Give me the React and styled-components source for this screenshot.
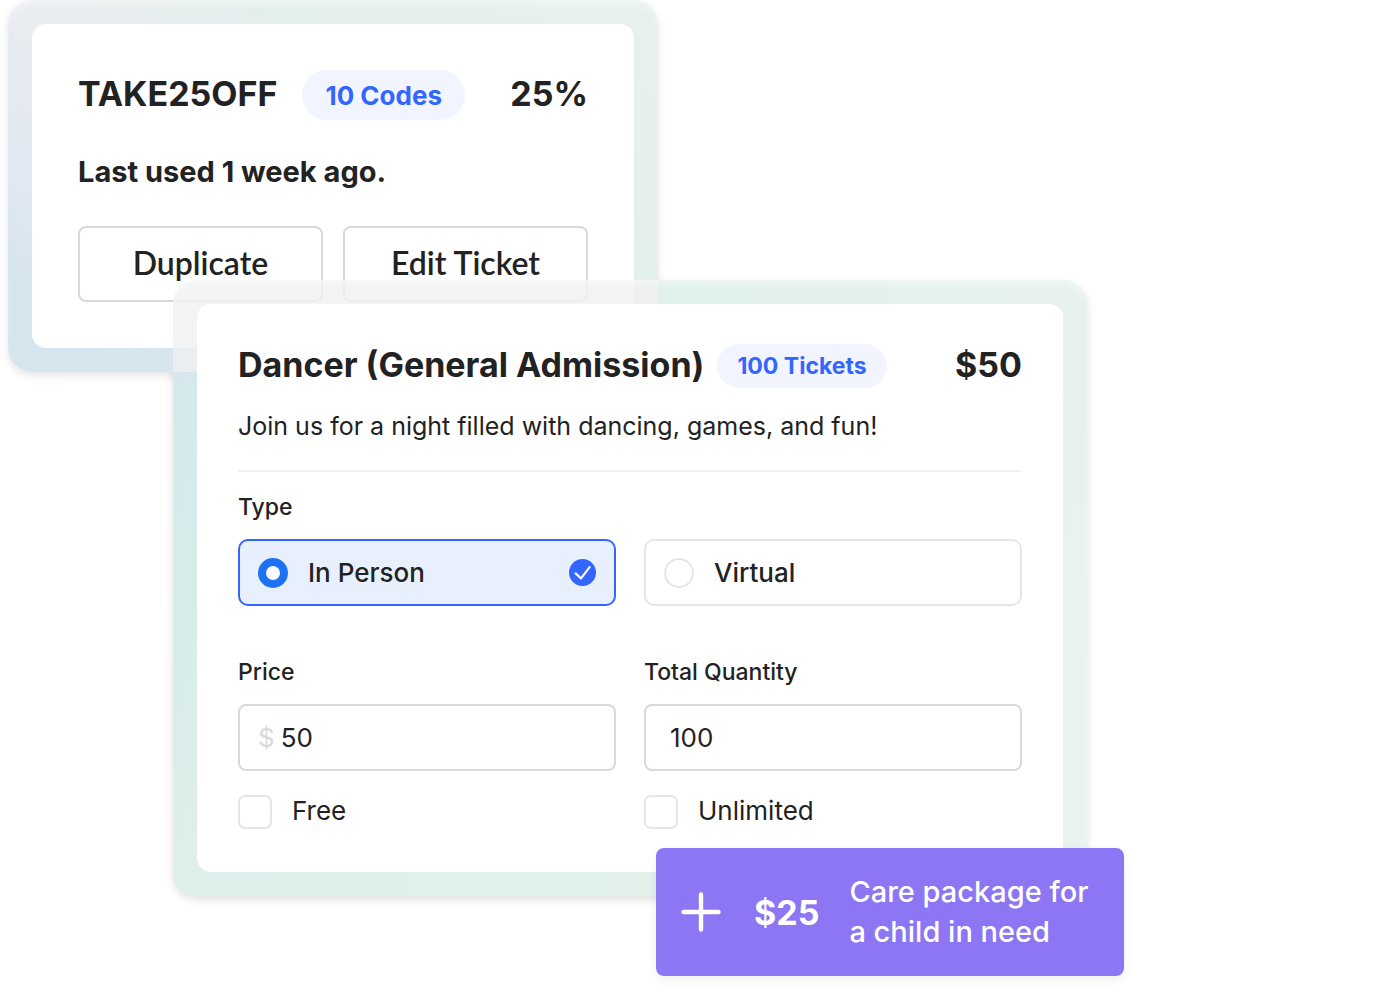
import React, { useState } from "react";
import styled, { createGlobalStyle } from "styled-components";

const GlobalStyle = createGlobalStyle`
  *, *::before, *::after { box-sizing: border-box; }
  body {
    margin: 0;
    background: #fff;
    color: #222;
    font-family: Inter, "Liberation Sans", sans-serif;
  }
  button, input { font: inherit; color: inherit; }
`;

const Scene = styled.main`
  isolation: isolate;
  display: flex;
  flex-direction: column;
  max-width: 1116px;
  margin: 0 8px 16px;
`;

const Frame = styled.section`
  position: relative;
  width: 100%;
  padding: 24px;
  border-radius: 24px;
`;

const CodeFrame = styled(Frame)`
  max-width: 650px;
  background: linear-gradient(
    35deg,
    #d5e5ed 0%,
    #d7e5ee 14%,
    #e1e8f2 25%,
    #e9ecf0 45%,
    #e7eeee 56%,
    #e3efeb 66%,
    #e6efeb 78%,
    #e7f0ed 100%
  );
  box-shadow: 0 4px 8px rgba(0, 0, 0, 0.1), inset 0 8px 8px -4px rgba(255, 255, 255, 0.5);
`;

/* The tint sits under the code card, the translucent sheet over it. */
const TicketFrame = styled(Frame)`
  max-width: 914px;
  margin: -92px 37px 0 auto;
  background: rgba(239, 240, 240, 0.8);
  box-shadow: inset 0 8px 8px -4px rgba(255, 255, 255, 0.5);

  &::before {
    content: "";
    position: absolute;
    inset: 0;
    z-index: -1;
    border-radius: inherit;
    background: linear-gradient(
      105deg,
      #72cce0 0%,
      #72cce0 3%,
      #72dbcc 9%,
      #9fead6 16%,
      #a4f4d6 45%,
      #c2f4e0 80%,
      #dbf9ef 100%
    );
    box-shadow: 0 4px 8px rgba(0, 0, 0, 0.12);
  }
`;

const Card = styled.div`
  border-radius: 14px;
  background: #fff;
  padding: ${(p) => p.$pad};
`;

const Header = styled.header`
  display: flex;
  align-items: center;
`;

const Title = styled.h2`
  margin: 0 0 2px;
  font-size: 34px;
  line-height: 42px;
  font-weight: 700;
  white-space: nowrap;
`;

const Pill = styled.span`
  display: flex;
  align-items: center;
  height: ${(p) => (p.$large ? 50 : 44)}px;
  margin-left: ${(p) => (p.$large ? 25 : 13)}px;
  padding: 0 ${(p) => (p.$large ? 23 : 20)}px;
  border-radius: 25px;
  background: #f2f5ff;
  color: #3366ff;
  font-size: ${(p) => (p.$large ? 26 : 23)}px;
  font-weight: 700;
  white-space: nowrap;
`;

const Amount = styled.strong`
  margin: 0 0 2px auto;
  font-size: 34px;
  line-height: 42px;
  font-weight: 700;
`;

const LastUsed = styled.p`
  margin: 34px 0 36px;
  font-size: 29px;
  line-height: 36px;
  font-weight: 700;
`;

const Actions = styled.div`
  display: grid;
  grid-template-columns: 1fr 1fr;
  gap: 20px;
`;

const ActionButton = styled.button`
  height: 76px;
  padding: 0 0 4px;
  border: 2px solid #d9d9d9;
  border-radius: 8px;
  background: #fff;
  font-family: Lato, "Liberation Sans", sans-serif;
  font-size: 32px;
  font-weight: 600;
`;

const Description = styled.p`
  margin: 20px 0 26px;
  font-size: 25px;
  line-height: 36px;
`;

const Divider = styled.hr`
  height: 2px;
  margin: 0 0 19px;
  border: 0;
  background: #f2f2f2;
`;

const Columns = styled.div`
  display: grid;
  grid-template-columns: repeat(2, minmax(0, 1fr));
  gap: 28px;
`;

const FieldLabel = styled.label`
  display: block;
  margin-bottom: 16px;
  font-size: 23px;
  line-height: 32px;
  font-weight: 500;
`;

const TypeGroup = styled.div`
  margin-bottom: 50px;
`;

const Option = styled.label`
  display: flex;
  align-items: center;
  height: 67px;
  padding: 0 18px;
  border: 2px solid ${(p) => (p.$selected ? "#3366ff" : "#e6e6e6")};
  border-radius: 10px;
  background: ${(p) => (p.$selected ? "#e8effd" : "#fff")};
  font-size: 26px;
  font-weight: 500;
`;

const Radio = styled.input`
  appearance: none;
  width: 30px;
  height: 30px;
  margin: 0 20px 0 0;
  border: 2px solid #e6e6e6;
  border-radius: 50%;
  background: #fff;

  &:checked {
    border: 8px solid #1c72f2;
  }
`;

const CheckMark = styled.svg`
  width: 28px;
  height: 28px;
  margin-left: auto;
`;

const TextBox = styled.div`
  display: flex;
  align-items: center;
  gap: 6px;
  height: 67px;
  padding: 0 ${(p) => p.$inset}px;
  border: 2px solid #d9d9d9;
  border-radius: 8px;
  font-size: 26px;
`;

const Currency = styled.span`
  color: #d9d9d9;
`;

const TextInput = styled.input`
  flex: 1;
  min-width: 0;
  padding: 0;
  border: 0;
  outline: 0;
  background: transparent;
`;

const Tick = styled.label`
  display: flex;
  align-items: center;
  gap: 20px;
  height: 34px;
  margin-top: 24px;
  font-size: 26px;
  line-height: 30px;
`;

const TickText = styled.span`
  padding-bottom: 2px;
`;

const TickBox = styled.input`
  appearance: none;
  width: 34px;
  height: 34px;
  margin: 0;
  border: 2px solid #e6e6e6;
  border-radius: 7px;
  background: #fff;

  &:checked {
    background: #3366ff;
  }
`;

const Callout = styled.button`
  position: relative;
  display: flex;
  align-items: center;
  width: 100%;
  max-width: 468px;
  min-height: 128px;
  margin: -48px 0 0 auto;
  padding: 0 24px;
  border: 0;
  border-radius: 8px;
  background: #8c76f3;
  color: #fff;
  text-align: left;
  box-shadow: 0 4px 12px rgba(0, 0, 0, 0.06);
`;

const PlusIcon = styled.svg`
  flex: none;
  width: 42px;
  height: 42px;
`;

const CalloutPrice = styled.strong`
  margin: 0 30px 0 32px;
  font-size: 34px;
  font-weight: 700;
`;

const CalloutText = styled.span`
  font-size: 29px;
  line-height: 40px;
  font-weight: 500;
`;

export default function App() {
  const [type, setType] = useState("In Person");

  return (
    <>
      <GlobalStyle />
      <Scene>
        <CodeFrame>
          <Card $pad="46px">
            <Header>
              <Title>TAKE25OFF</Title>
              <Pill $large>10 Codes</Pill>
              <Amount>25%</Amount>
            </Header>
            <LastUsed>Last used 1 week ago.</LastUsed>
            <Actions>
              <ActionButton type="button">Duplicate</ActionButton>
              <ActionButton type="button">Edit Ticket</ActionButton>
            </Actions>
          </Card>
        </CodeFrame>

        <TicketFrame>
          <Card $pad="40px 41px 43px">
            <Header>
              <Title>Dancer (General Admission)</Title>
              <Pill>100 Tickets</Pill>
              <Amount>$50</Amount>
            </Header>
            <Description>Join us for a night filled with dancing, games, and fun!</Description>
            <Divider />
            <TypeGroup role="radiogroup" aria-labelledby="type-label">
              <FieldLabel as="div" id="type-label">Type</FieldLabel>
              <Columns>
                {["In Person", "Virtual"].map((name) => (
                  <Option key={name} $selected={type === name}>
                    <Radio type="radio" name="type" checked={type === name} onChange={() => setType(name)} />
                    {name}
                    {type === name && (
                      <CheckMark viewBox="0 0 28 28" aria-hidden="true">
                        <circle cx="14.5" cy="13.5" r="13.5" fill="#3366ff" />
                        <path
                          d="M7.6 14.4l5.4 5L21.6 8.2"
                          fill="none"
                          stroke="#fff"
                          strokeWidth="2.2"
                          strokeLinecap="round"
                          strokeLinejoin="round"
                        />
                      </CheckMark>
                    )}
                  </Option>
                ))}
              </Columns>
            </TypeGroup>
            <Columns>
              <div>
                <FieldLabel htmlFor="price">Price</FieldLabel>
                <TextBox $inset={18}>
                  <Currency>$</Currency>
                  <TextInput id="price" defaultValue="50" />
                </TextBox>
                <Tick>
                  <TickBox type="checkbox" />
                  <TickText>Free</TickText>
                </Tick>
              </div>
              <div>
                <FieldLabel htmlFor="quantity">Total Quantity</FieldLabel>
                <TextBox $inset={24}>
                  <TextInput id="quantity" defaultValue="100" />
                </TextBox>
                <Tick>
                  <TickBox type="checkbox" />
                  <TickText>Unlimited</TickText>
                </Tick>
              </div>
            </Columns>
          </Card>
        </TicketFrame>

        <Callout type="button">
          <PlusIcon viewBox="0 0 42 42" aria-hidden="true">
            <path d="M21 3.5v35M3.5 21h35" stroke="#fff" strokeWidth="4.4" strokeLinecap="round" />
          </PlusIcon>
          <CalloutPrice>$25</CalloutPrice>
          <CalloutText>
            Care package for
            <br />a child in need
          </CalloutText>
        </Callout>
      </Scene>
    </>
  );
}
